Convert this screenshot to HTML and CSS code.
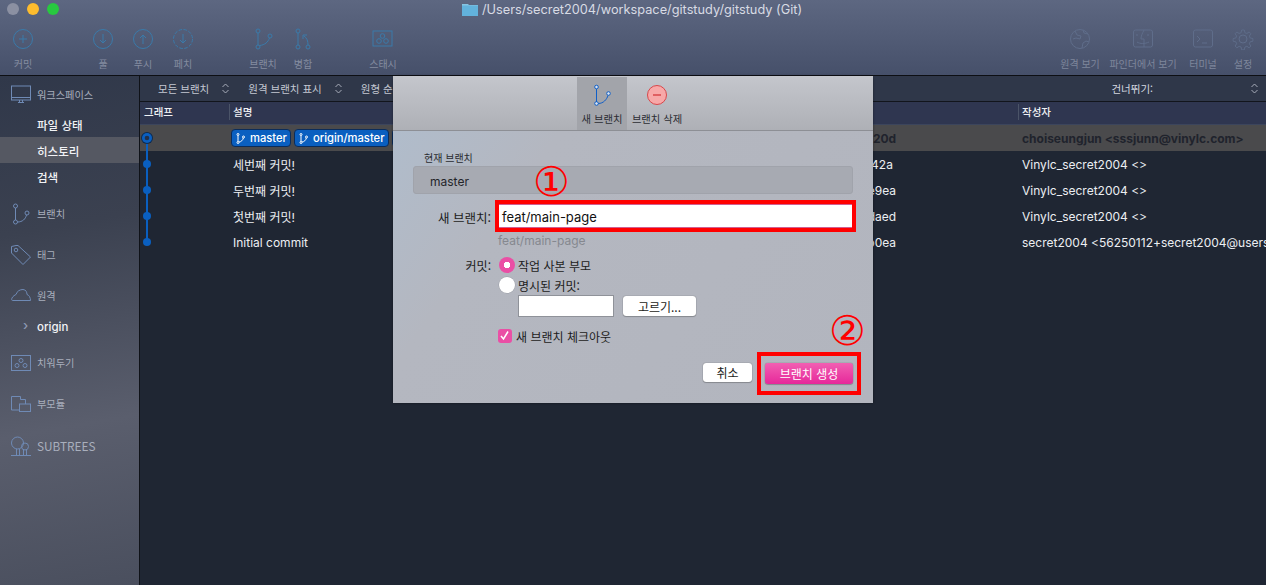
FILE: index.html
```html
<!DOCTYPE html>
<html lang="ko">
<head>
    <meta charset="UTF-8">
    <title>gitstudy (Git)</title>
    <link rel="stylesheet" href="styles.css">
</head>
<body>
    <div class="app">
        <header class="titlebar">
            <div class="top-row">
                <div class="lights">
                    <span class="light grey"></span>
                    <span class="light yellow"></span>
                    <span class="light green"></span>
                </div>
                <div class="window-title">
                    <svg class="folder-icon" width="16" height="12" viewBox="0 0 16 12"><path d="M0 2V0h6l1 1h9v1z" fill="#86c4e2"/><rect y="1.500" width="16" height="10.500" fill="#62b2dc"/></svg>
                    <span>/Users/secret2004/workspace/gitstudy/gitstudy (Git)</span>
                </div>
            </div>
            <div class="toolbar">
                <div class="tool tool-commit">
                    <svg width="22" height="22" viewBox="0 0 22 22"><circle cx="11" cy="11" r="9.500"/><path d="M11 7v8M7 11h8"/></svg>
                    <span>커밋</span>
                </div>
                <div class="tool tool-pull">
                    <svg width="22" height="22" viewBox="0 0 22 22"><circle cx="11" cy="11" r="9.500"/><path d="M11 6v9M8 12l3 3 3-3"/></svg>
                    <span>풀</span>
                </div>
                <div class="tool tool-push">
                    <svg width="22" height="22" viewBox="0 0 22 22"><circle cx="11" cy="11" r="9.500"/><path d="M11 16V7M8 10l3-3 3 3"/></svg>
                    <span>푸시</span>
                </div>
                <div class="tool tool-fetch">
                    <svg width="22" height="22" viewBox="0 0 22 22"><circle cx="11" cy="11" r="9.500" stroke-dasharray="3.500 1.500"/><path d="M11 6v9M8 12l3 3 3-3"/></svg>
                    <span>페치</span>
                </div>
                <div class="tool tool-branch">
                    <svg width="22" height="22" viewBox="0 0 22 22"><circle cx="6" cy="3" r="2"/><circle cx="6" cy="19" r="2"/><circle cx="18" cy="8" r="2"/><path d="M6 5v12M7.500 17.500C13 17 16 14 17.500 10"/></svg>
                    <span>브랜치</span>
                </div>
                <div class="tool tool-merge">
                    <svg width="22" height="22" viewBox="0 0 22 22"><circle cx="6" cy="3" r="2"/><circle cx="6" cy="19" r="2"/><circle cx="16" cy="19" r="2"/><path d="M6 5v12M16 17c0-4-1-7-4-9M11 11V7h4"/></svg>
                    <span>병합</span>
                </div>
                <div class="tool tool-stash">
                    <svg width="22" height="22" viewBox="0 0 22 22"><rect x="1" y="3" width="19" height="15"/><circle cx="10.500" cy="8" r="2.300"/><circle cx="7" cy="13" r="2.300"/><circle cx="14" cy="13" r="2.300"/></svg>
                    <span>스태시</span>
                </div>
                <div class="tool tool-remote">
                    <svg width="22" height="22" viewBox="0 0 22 22"><circle cx="11" cy="11" r="9.500"/><path d="M6 3l2 4 4 1-1 3-4-1-3 1M13 20l1-5 3-2 3 1M14 2l1 3 4 1"/></svg>
                    <span>원격 보기</span>
                </div>
                <div class="tool tool-finder">
                    <svg width="22" height="22" viewBox="0 0 22 22"><rect x="1.500" y="2" width="19" height="17" rx="2"/><path d="M12 2c-2 4-3 6-3 9h3v8M5 6v2M16 6v2M5 14c3 2 8 2 12 0"/></svg>
                    <span>파인더에서 보기</span>
                </div>
                <div class="tool tool-terminal">
                    <svg width="22" height="22" viewBox="0 0 22 22"><rect x="1.500" y="2" width="19" height="17" rx="2"/><path d="M5 8l3 3-3 3M10 15h5"/></svg>
                    <span>터미널</span>
                </div>
                <div class="tool tool-settings">
                    <svg width="22" height="22" viewBox="0 0 22 22"><circle cx="11" cy="11" r="4"/><path d="M9.500 1h3l.6 3 2.200.9 2.500-1.700 2 2-1.700 2.500.9 2.200 3 .6v3l-3 .6-.9 2.200 1.700 2.500-2 2-2.500-1.700-2.200.9-.6 3h-3l-.6-3-2.200-.9-2.500 1.700-2-2 1.700-2.500-.9-2.200-3-.6v-3l3-.6.9-2.200-1.700-2.500 2-2 2.500 1.700 2.200-.9z" transform="translate(1.100 1.100) scale(.9)"/></svg>
                    <span>설정</span>
                </div>
            </div>
        </header>

        <div class="body-row">
            <aside class="sidebar">
                <div class="side-head head-workspace">
                    <svg width="20" height="20" viewBox="0 0 20 20"><rect x=".5" y="1" width="19" height="14"/><path d="M.5 12.500h19M7 17.500h6M8.500 15v2.500M11.500 15v2.500"/></svg>
                    <span>워크스페이스</span>
                </div>
                <div class="side-item">파일 상태</div>
                <div class="side-item active">히스토리</div>
                <div class="side-item">검색</div>
                <div class="side-head head-branch">
                    <svg width="20" height="22" viewBox="0 0 20 22"><circle cx="4.500" cy="3" r="2"/><circle cx="4.500" cy="19" r="2"/><circle cx="16" cy="10" r="2"/><path d="M4.500 5v12M6.500 19c5 0 8-3 9-7"/></svg>
                    <span>브랜치</span>
                </div>
                <div class="side-head head-tag">
                    <svg width="20" height="20" viewBox="0 0 20 20"><path d="M.5 5V1.500L5 .5h2L19.500 12 12 19.500.5 8z"/><circle cx="5" cy="5" r="1.800"/></svg>
                    <span>태그</span>
                </div>
                <div class="side-head head-remote">
                    <svg width="20" height="14" viewBox="0 0 20 14"><path d="M4 11.500H1.500C.5 11.500.5 10 1 9c1-2 3-3 4-3.500C6 2 9 .5 12 .5c3 0 4 3 4 5 2 .5 3.500 3 3.500 6z"/></svg>
                    <span>원격</span>
                </div>
                <div class="side-item origin"><span class="chevron">›</span>origin</div>
                <div class="side-head head-stash">
                    <svg width="20" height="16" viewBox="0 0 20 16"><rect x=".5" y=".5" width="19" height="15"/><circle cx="10" cy="5.500" r="2"/><circle cx="6" cy="10.500" r="2"/><circle cx="14" cy="10.500" r="2"/></svg>
                    <span>치워두기</span>
                </div>
                <div class="side-head head-module">
                    <svg width="20" height="16" viewBox="0 0 20 16"><path d="M.5 14V.5h9v3h5V8M.5 14h8"/><rect x="8.500" y="8" width="11" height="7.500"/></svg>
                    <span>부모듈</span>
                </div>
                <div class="side-head head-subtree">
                    <svg width="20" height="20" viewBox="0 0 20 20"><circle cx="6.500" cy="7" r="6"/><circle cx="14" cy="10.500" r="3.500"/><path d="M0 19.500h20M5.500 13v6.500M8.500 13v6.500M12.500 14v5.500M15.500 14v5.500"/></svg>
                    <span>SUBTREES</span>
                </div>
            </aside>

            <main class="history">
                <div class="filter-bar">
                    <span class="filter filter-all">모든 브랜치</span>
                    <span class="updown">
                        <svg width="7" height="11" viewBox="0 0 7 11"><path d="M.5 4l3-3 3 3M.5 7l3 3 3-3"/></svg>
                    </span>
                    <span class="filter filter-remote">원격 브랜치 표시</span>
                    <span class="updown">
                        <svg width="7" height="11" viewBox="0 0 7 11"><path d="M.5 4l3-3 3 3M.5 7l3 3 3-3"/></svg>
                    </span>
                    <span class="filter filter-order">원형 순서</span>
                    <span class="filter filter-skip">건너뛰기:</span>
                    <span class="updown updown-end">
                        <svg width="7" height="11" viewBox="0 0 7 11"><path d="M.5 4l3-3 3 3M.5 7l3 3 3-3"/></svg>
                    </span>
                </div>
                <div class="col-row">
                    <div class="col col-graph">그래프</div>
                    <div class="col col-desc">설명</div>
                    <div class="col col-hash"></div>
                    <div class="col col-author">작성자</div>
                </div>
                <div class="rows">
                    <svg class="graph" width="20" height="130" viewBox="0 0 20 130">
                        <path d="M7 13v104" stroke="#0a5fc0" stroke-width="2" fill="none"/>
                        <circle cx="7" cy="13" r="6" fill="#0d2b50"/>
                        <circle cx="7" cy="13" r="5" fill="#0a5fc0"/>
                        <circle cx="7" cy="13" r="2.300" fill="#22304a"/>
                        <circle cx="7" cy="39" r="4" fill="#0a5fc0"/>
                        <circle cx="7" cy="65" r="4" fill="#0a5fc0"/>
                        <circle cx="7" cy="91" r="4" fill="#0a5fc0"/>
                        <circle cx="7" cy="117" r="4" fill="#0a5fc0"/>
                    </svg>
                    <div class="row selected">
                        <div class="cell-desc">
                            <span class="ref ref-first">
                                <svg width="9" height="11" viewBox="0 0 9 11"><circle cx="2" cy="1.500" r="1"/><circle cx="2" cy="9.500" r="1"/><circle cx="7.500" cy="4" r="1"/><path d="M2 2.500v6M3 9c2 0 4-2 4.300-4"/></svg>
                                master
                            </span>
                            <span class="ref">
                                <svg width="9" height="11" viewBox="0 0 9 11"><circle cx="2" cy="1.500" r="1"/><circle cx="2" cy="9.500" r="1"/><circle cx="7.500" cy="4" r="1"/><path d="M2 2.500v6M3 9c2 0 4-2 4.300-4"/></svg>
                                origin/master
                            </span>
                            <span class="ref ref-cut"></span>
                        </div>
                        <div class="cell-hash">b1220d</div>
                        <div class="cell-author">choiseungjun &lt;sssjunn@vinylc.com&gt;</div>
                    </div>
                    <div class="row">
                        <div class="cell-desc">세번째 커밋!</div>
                        <div class="cell-hash">c1a42a</div>
                        <div class="cell-author">Vinylc_secret2004 &lt;&gt;</div>
                    </div>
                    <div class="row">
                        <div class="cell-desc">두번째 커밋!</div>
                        <div class="cell-hash">b8e9ea</div>
                        <div class="cell-author">Vinylc_secret2004 &lt;&gt;</div>
                    </div>
                    <div class="row">
                        <div class="cell-desc">첫번째 커밋!</div>
                        <div class="cell-hash">b8daed</div>
                        <div class="cell-author">Vinylc_secret2004 &lt;&gt;</div>
                    </div>
                    <div class="row">
                        <div class="cell-desc">Initial commit</div>
                        <div class="cell-hash">e5b0ea</div>
                        <div class="cell-author">secret2004 &lt;56250112+secret2004@users.noreply.github.com&gt;</div>
                    </div>
                </div>
            </main>
        </div>

        <!-- Branch dialog sits over the window -->
        <div class="dialog">
            <div class="dialog-tabs">
                <div class="dialog-tab active">
                    <svg width="18" height="22" viewBox="0 0 18 22"><circle cx="3.500" cy="3" r="1.800"/><circle cx="3.500" cy="19.500" r="1.800"/><circle cx="15.500" cy="9.500" r="1.800"/><path d="M3.500 5v13M5.300 19.500c5 0 8.500-4 9.700-8"/></svg>
                    <span>새 브랜치</span>
                </div>
                <div class="dialog-tab">
                    <svg class="minus-icon" width="22" height="22" viewBox="0 0 22 22"><circle cx="11" cy="11" r="9.500"/><path d="M7 11h8"/></svg>
                    <span>브랜치 삭제</span>
                </div>
            </div>
            <div class="dialog-body">
                <div class="current-label">현재 브랜치</div>
                <div class="current-box">master</div>
                <div class="form-row row-name">
                    <label class="form-label">새 브랜치:</label>
                    <div class="name-input">feat/main-page</div>
                </div>
                <div class="name-hint">feat/main-page</div>
                <div class="form-row row-commit">
                    <label class="form-label">커밋:</label>
                    <div class="radio on"></div>
                    <span>작업 사본 부모</span>
                </div>
                <div class="form-row row-named">
                    <div class="radio"></div>
                    <span>명시된 커밋:</span>
                </div>
                <div class="form-row row-pick">
                    <div class="commit-input"></div>
                    <div class="btn btn-pick">고르기...</div>
                </div>
                <div class="form-row row-check">
                    <div class="check">
                        <svg width="13" height="13" viewBox="0 0 13 13"><path d="M3 7l2.500 3L10 2.500"/></svg>
                    </div>
                    <span>새 브랜치 체크아웃</span>
                </div>
                <div class="dialog-actions">
                    <div class="btn btn-cancel">취소</div>
                    <div class="btn btn-create">브랜치 생성</div>
                </div>
            </div>
        </div>

        <!-- Red annotations drawn on top of the screenshot -->
        <div class="mark mark-input"></div>
        <div class="mark mark-button"></div>
        <div class="num num-one">①</div>
        <div class="num num-two">②</div>
    </div>
</body>
</html>
```

FILE: styles.css
```css
* {
    box-sizing: border-box;
}

html, body {
    margin: 0;
    height: 100%;
    overflow: hidden;
}

body {
    font-family: "Noto Sans CJK KR", "Inter", "Liberation Sans", sans-serif;
    font-size: 12px;
    background: #1f2633;
}

.app {
    position: relative;
    width: 1266px;
    height: 585px;
    overflow: hidden;
    display: flex;
    flex-direction: column;
}

/* title bar + toolbar */
.titlebar {
    height: 76px;
    flex: none;
    background: linear-gradient(#5d6781, #46506a);
    border-bottom: 1px solid #0d0f14;
}

.top-row {
    height: 19px;
    position: relative;
}

.lights {
    display: flex;
    gap: 8px;
    padding: 3px 0 0 7px;
}

.light {
    width: 12px;
    height: 12px;
    border-radius: 50%;
}

.light.grey { background: #8b90a2; }
.light.yellow { background: #fdbc2e; }
.light.green { background: #28c93f; }

.window-title {
    position: absolute;
    left: 462px;
    top: 1px;
    display: flex;
    align-items: center;
    gap: 4px;
    color: #d8dbe4;
    font-family: "Inter", "Liberation Sans", sans-serif;
    font-size: 12.750px;
    line-height: 17px;
}

.toolbar {
    display: flex;
    padding: 9px 3px 0;
}

.tool {
    width: 40px;
    display: flex;
    flex-direction: column;
    align-items: center;
    gap: 7px;
    color: #848ca0;
    font-size: 10px;
    line-height: 14px;
    white-space: nowrap;
    flex: none;
}

.tool svg {
    fill: none;
    stroke: #3a7aaa;
    stroke-width: 1;
}

.tool-pull { margin-left: 40px; }
.tool-branch { margin-left: 40px; }
.tool-stash { margin-left: 40px; }
.tool-remote { margin-left: auto; margin-right: 5px; width: 46px; }
.tool-finder { width: 70px; margin-right: 5px; }

.tool-remote svg,
.tool-finder svg,
.tool-terminal svg,
.tool-settings svg {
    stroke: #5f6d8a;
}

.tool-remote,
.tool-finder,
.tool-terminal,
.tool-settings {
    color: #7f879c;
}

/* main area */
.body-row {
    flex: 1;
    display: flex;
    min-height: 0;
}

.sidebar {
    width: 140px;
    flex: none;
    background: linear-gradient(170deg, #30384a 0%, #3b4150 30%, #5a5e6d 68%, #4a4f5e 100%);
    border-right: 1px solid #0f1218;
    padding-top: 9px;
}

.side-head {
    display: flex;
    align-items: center;
    gap: 6px;
    padding-left: 11px;
    color: #a9afbd;
    font-size: 10.200px;
    line-height: 20px;
}

.side-head svg {
    fill: none;
    stroke: #6f8ab5;
    stroke-width: 1;
    flex: none;
}

.side-item {
    height: 26px;
    line-height: 28px;
    padding-left: 37px;
    color: #f2f3f6;
    font-size: 11.500px;
    font-weight: 500;
}

.side-item.active {
    background: #555862;
}

.head-workspace { margin-bottom: 6px; }
.head-branch { margin-top: 14px; }
.head-tag { margin-top: 20px; }
.head-remote { margin-top: 21px; }
.head-stash { margin-top: 13px; }
.head-module { margin-top: 21px; }
.head-subtree { margin-top: 22px; }

.head-subtree span {
    font-size: 11.800px;
}

.side-item.origin {
    margin-top: 8px;
    position: relative;
    line-height: 26px;
    font-family: "Inter", "Noto Sans CJK KR", sans-serif;
    font-size: 11.500px;
}

.chevron {
    position: absolute;
    left: 23px;
    top: -2px;
    color: #8e9ab2;
    font-size: 13px;
}

.history {
    flex: 1;
    min-width: 0;
    background: #1f2633;
    position: relative;
}

.filter-bar {
    height: 26px;
    background: #2f3749;
    border-bottom: 1px solid #12151c;
    display: flex;
    align-items: center;
    color: #c4c8d2;
    font-size: 10.500px;
    white-space: nowrap;
}

.filter-all { margin-left: 18px; }
.filter-remote { margin-left: 19px; }
.filter-order { margin-left: 19px; }
.filter-skip { margin-left: auto; color: #d6d9e0; margin-right: 98px; }

.updown {
    margin-left: 13px;
    display: flex;
}

.updown-end { margin-left: 0; margin-right: 8px; }

.updown svg {
    fill: none;
    stroke: #a8adba;
    stroke-width: 1;
}

.col-row {
    height: 23px;
    background: #2f3650;
    border-bottom: 1px solid #3c455c;
    display: flex;
    color: #f0f1f4;
    font-size: 10.500px;
    font-weight: 500;
    line-height: 19px;
}

.col {
    padding-left: 4px;
    position: relative;
}

.col + .col::before {
    content: "";
    position: absolute;
    left: 0;
    top: 2px;
    height: 16px;
    width: 1px;
    background: #4b5468;
}

.col-graph { width: 89px; }
.col-desc { width: 609px; }
.col-hash { width: 180px; }
.col-author { flex: 1; }

.rows {
    position: relative;
}

.graph {
    position: absolute;
    left: 0;
    top: 0;
    z-index: 1;
}

.row {
    height: 26px;
    display: flex;
    align-items: center;
    color: #eceef2;
    font-family: "Inter", "Noto Sans CJK KR", sans-serif;
    font-size: 12px;
    white-space: nowrap;
    overflow: hidden;
}

.row.selected {
    background: #4a4a4c;
    color: #20232c;
    font-weight: 700;
}

.cell-desc {
    width: 713px;
    padding-left: 93px;
    display: flex;
    gap: 3px;
    flex: none;
}

.cell-hash {
    width: 165px;
    flex: none;
}

.cell-author {
    padding-left: 4px;
}

.ref {
    height: 18px;
    display: inline-flex;
    align-items: center;
    gap: 5px;
    padding: 0 3px 0 4px;
    background: #0a5fc0;
    border: 1px solid #0b2c5a;
    border-radius: 4px;
    color: #fff;
    font-size: 11.200px;
    font-weight: 500;
}

.ref-first {
    margin-left: -2px;
}

.ref svg {
    fill: none;
    stroke: #fff;
    stroke-width: 1;
}

.ref-cut {
    width: 30px;
}

/* new branch dialog */
.dialog {
    position: absolute;
    left: 393px;
    top: 76px;
    width: 480px;
    height: 327px;
    background: #b2b6c0;
    border-radius: 5px 5px 0 0;
    color: #1c1c20;
    font-size: 12px;
    box-shadow: 0 0 3px rgba(0, 0, 0, .4);
}

.dialog-tabs {
    height: 55px;
    display: flex;
    justify-content: flex-start;
    padding: 1px 0 0 184px;
    background: linear-gradient(#c4c6cc, #aeb0b6);
    border-bottom: 1px solid #8d8f95;
}

.dialog-tab {
    width: 50px;
    display: flex;
    flex-direction: column;
    align-items: center;
    gap: 6px;
    padding-top: 7px;
    font-size: 10.300px;
    line-height: 14px;
    white-space: nowrap;
    color: #2c2d33;
}

.dialog-tab.active {
    background: #a2a4aa;
}

.dialog-tab svg {
    fill: none;
    stroke: #0f5fc8;
    stroke-width: 1;
}

.dialog-tab svg circle {
    fill: #dbe4f0;
}

.dialog-tab + .dialog-tab {
    width: 60px;
}

.dialog-tab .minus-icon circle {
    fill: #f7a8a8;
    stroke: #d8474a;
}

.dialog-tab .minus-icon path {
    stroke: #d8474a;
    stroke-width: 1.500;
}

.dialog-body {
    position: relative;
    height: 272px;
    padding: 20px 20px 0 20px;
    background: linear-gradient(125deg, #b0bccb 0%, #b4b7c0 25%, #b2b5be 100%);
}

.current-label {
    font-size: 10px;
    line-height: 14px;
    margin-left: 11px;
    color: #2a2b30;
}

.current-box {
    height: 28px;
    margin-top: 1px;
    line-height: 30px;
    padding-left: 16px;
    background: #a7aab2;
    border: 1px solid #a0a3ab;
    border-radius: 3px;
    font-family: "Inter", sans-serif;
    font-size: 12px;
    color: #24252a;
}

.form-row {
    display: flex;
    align-items: center;
}

.form-label {
    width: 78px;
    text-align: right;
    margin-right: 4px;
    font-size: 12.500px;
    white-space: nowrap;
}

.row-commit .form-label {
    font-size: 12px;
}

.row-name {
    margin-top: 10px;
}

.row-name .form-label {
    padding-top: 4px;
}

.name-input {
    width: 354px;
    height: 22px;
    margin-left: 3px;
    padding-left: 4px;
    line-height: 25px;
    background: #fff;
    box-shadow: 0 0 0 1px #cf5f92;
    font-family: "Inter", sans-serif;
    font-size: 13px;
    color: #111;
}

.name-hint {
    margin: 6px 0 0 85px;
    font-family: "Inter", sans-serif;
    font-size: 12px;
    line-height: 15px;
    color: #85888f;
}

.row-commit {
    margin-top: 7px;
    height: 20px;
}

.radio {
    width: 16px;
    height: 16px;
    margin-left: 4px;
    margin-right: 3px;
    border-radius: 50%;
    background: #fff;
    box-shadow: 0 0 0 .5px #9a9da5;
    flex: none;
}

.radio.on {
    background: radial-gradient(circle, #fff 0 3px, #ea4fa5 3.500px);
    box-shadow: none;
}

.row-named {
    height: 20px;
    padding-left: 82px;
}

.row-pick {
    margin: 0 0 0 105px;
    gap: 9px;
}

.commit-input {
    width: 96px;
    height: 22px;
    background: #fff;
    border: 1px solid #8f9299;
}

.btn {
    display: flex;
    align-items: center;
    justify-content: center;
    background: #fff;
    border-radius: 3px;
    box-shadow: 0 0 1px rgba(0, 0, 0, .6), 0 1px 1px rgba(0, 0, 0, .2);
    color: #1c1c20;
    font-size: 12px;
}

.btn-pick {
    width: 73px;
    height: 20px;
}

.row-check {
    margin: 10px 0 0 85px;
    gap: 4px;
    height: 18px;
}

.check {
    width: 14px;
    height: 14px;
    background: #ea4fa5;
    border-radius: 3px;
    display: flex;
}

.check svg {
    fill: none;
    stroke: #fff;
    stroke-width: 1.500;
}

.dialog-actions {
    position: absolute;
    right: 20px;
    bottom: 20px;
    display: flex;
    gap: 13px;
}

.btn-cancel {
    width: 49px;
    height: 19px;
}

.btn-create {
    width: 88px;
    height: 21px;
    color: #fff;
    background: linear-gradient(#f25fb2, #e6289a);
    margin-bottom: -1px;
}

/* annotations */
.mark {
    position: absolute;
    border: 4px solid #ff0000;
}

.mark-input {
    left: 495px;
    top: 200px;
    width: 361px;
    height: 32px;
}

.mark-button {
    left: 757px;
    top: 352px;
    width: 104px;
    height: 43px;
}

.num {
    position: absolute;
    color: #ff0000;
    font-family: "DejaVu Sans", sans-serif;
    line-height: 1;
    font-size: 41px;
}

.num-one {
    left: 533px;
    top: 162px;
}

.num-two {
    left: 829px;
    top: 311px;
}
```
